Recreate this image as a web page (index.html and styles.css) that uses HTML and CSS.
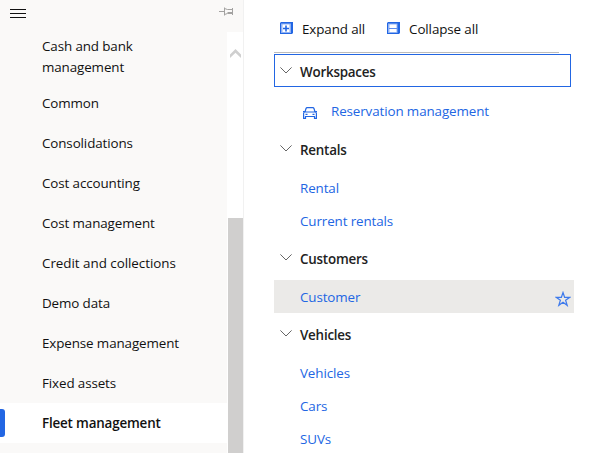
FILE: index.html
```html
<!DOCTYPE html>
<html lang="en">
<head>
<meta charset="utf-8">
<title>Fleet management</title>
<link rel="stylesheet" href="styles.css">
</head>
<body>
<div class="app">
  <aside class="sidebar">
    <header class="sidebar-head">
      <svg class="menu-icon" width="16" height="9" viewBox="0 0 16 9"><path d="M0 .5h16M0 4.5h16M0 8.5h16"/></svg>
      <svg class="pin-icon" width="15" height="9" viewBox="0 0 15 9"><path d="M0 4.5h5M5.500 .5v8M5.500 1.500l3 1h5M5.500 7.500l3-1h5M13.500 1v7M8.500 5.500h5"/></svg>
    </header>
    <div class="sidebar-body">
      <nav class="modules">
        <a class="module two-line">Cash and bank<br>management</a>
        <a class="module">Common</a>
        <a class="module">Consolidations</a>
        <a class="module">Cost accounting</a>
        <a class="module">Cost management</a>
        <a class="module loose">Credit and collections</a>
        <a class="module">Demo data</a>
        <a class="module">Expense management</a>
        <a class="module">Fixed assets</a>
        <a class="module selected">Fleet management</a>
      </nav>
      <div class="scrollbar">
        <svg class="scroll-up" width="11" height="9" viewBox="0 0 11 9"><path d="M0 5.600L5.500 0 11 5.600V9L5.500 3.800 0 9z"/></svg>
        <div class="thumb"></div>
      </div>
    </div>
  </aside>
  <main class="content">
    <div class="toolbar">
      <button class="tool">
        <svg class="box-icon" width="13" height="12" viewBox="0 0 13 12"><path class="box-frame" d="M0 1L1 0h12v11l-1 1H0z"/><path class="box-light" d="M1 1.500h10v9.500H1z"/><path class="box-hole" d="M2.500 2.500h7v7.500h-7z"/><path class="box-sign" d="M3 6.500h6M6 3.500v6"/></svg>
        <span>Expand all</span>
      </button>
      <button class="tool">
        <svg class="box-icon" width="13" height="12" viewBox="0 0 13 12"><path class="box-frame" d="M0 1L1 0h12v11l-1 1H0z"/><path class="box-light" d="M1 1.500h9.500v9.500H1z"/><path class="box-hole" d="M2.500 2.500h7v7.500h-7z"/><path class="box-sign thin" d="M2 6.500h8"/></svg>
        <span>Collapse all</span>
      </button>
    </div>
    <section class="group">
      <h2 class="group-head focused"><svg class="chevron" width="12" height="7" viewBox="0 0 12 7"><path d="M.4 .4L6 6 11.600 .4"/></svg>Workspaces</h2>
      <a class="link workspace">
        <svg class="car-icon" width="14" height="12" viewBox="0 0 14 12"><path d="M2 5L3 1.500Q3.300.6 4.200.6h5.600q.9 0 1.200.9L12 5M0 4.500h1.500M12.500 4.500H14M2 5h10q1.400 0 1.400 1.400V11.400H11.500V9.500h-9v1.900H.6V6.400Q.6 5 2 5M2.500 7.300h2M9.500 7.300h2"/></svg>
        <span>Reservation management</span>
      </a>
    </section>
    <section class="group">
      <h2 class="group-head"><svg class="chevron" width="12" height="7" viewBox="0 0 12 7"><path d="M.4 .4L6 6 11.600 .4"/></svg>Rentals</h2>
      <a class="link">Rental</a>
      <a class="link">Current rentals</a>
    </section>
    <section class="group">
      <h2 class="group-head"><svg class="chevron" width="12" height="7" viewBox="0 0 12 7"><path d="M.4 .4L6 6 11.600 .4"/></svg>Customers</h2>
      <a class="link hovered">Customer
        <svg class="star-icon" width="16" height="16" viewBox="0 0 16 16"><path d="M8 1.500L9.600 6.300H14.800L10.600 9.300 12.200 14.300 8 11.200 3.800 14.300 5.400 9.300 1.200 6.300H6.400z"/></svg>
      </a>
    </section>
    <section class="group">
      <h2 class="group-head"><svg class="chevron" width="12" height="7" viewBox="0 0 12 7"><path d="M.4 .4L6 6 11.600 .4"/></svg>Vehicles</h2>
      <a class="link">Vehicles</a>
      <a class="link">Cars</a>
      <a class="link">SUVs</a>
    </section>
  </main>
</div>
</body>
</html>
```
FILE: styles.css
```css
* { box-sizing: border-box; }
body {
  margin: 0;
  overflow: hidden;
  background: #fff;
  color: #111;
  font-family: "Segoe UI", "Open Sans", "Noto Sans", sans-serif;
  font-size: 13.4px;
  letter-spacing: -0.11px;
}
svg { flex: none; fill: none; }
.app { display: flex; height: 453px; }

.sidebar {
  display: flex;
  flex-direction: column;
  width: 244px;
  background: #faf9f8;
  border-right: 1px solid #f1f1f1;
}
.sidebar-head {
  display: flex;
  flex: none;
  justify-content: space-between;
  height: 32px;
  padding: 9px 9px 0 10px;
}
.menu-icon { stroke: #111; }
.pin-icon { margin-top: -2px; stroke: #a3a2a1; }
.sidebar-body { display: flex; flex: 1; min-height: 0; }
.modules { width: 227px; overflow: hidden; }
.module {
  display: block;
  height: 40px;
  padding-left: 42px;
  line-height: 40px;
  white-space: nowrap;
}
.module.two-line { height: 51px; padding-top: 4px; line-height: 21px; }
.module.loose { letter-spacing: -0.03px; }
.module.selected {
  position: relative;
  background: #fff;
  font-weight: 600;
  letter-spacing: -0.17px;
}
.module.selected::before {
  content: "";
  position: absolute;
  left: -3px;
  top: 6px;
  width: 8px;
  height: 28px;
  border-radius: 3px;
  background: #2266e3;
}
.scrollbar {
  display: flex;
  flex-direction: column;
  width: 16px;
  padding-top: 17px;
  background: #fff;
}
.scroll-up { margin-left: 3px; fill: #cfcfcf; }
.thumb { flex: 1; width: 15px; margin: 160px 0 0 1px; background: #d0cfce; }

.content { width: 300px; margin-left: 30px; }
.toolbar {
  display: flex;
  gap: 22px;
  width: 285px;
  height: 53px;
  padding: 19px 0 0 6px;
  border-bottom: 1px solid #bcbcbc;
}
.tool {
  display: flex;
  gap: 9px;
  height: 20px;
  padding: 0;
  border: 0;
  background: none;
  color: inherit;
  font: inherit;
  letter-spacing: inherit;
  line-height: 20px;
  white-space: nowrap;
}
.box-icon { margin-top: 3px; }
.box-frame { fill: #2266e3; }
.box-light { fill: #8fb2f5; }
.box-hole { fill: #fff; }
.box-sign { stroke: #2266e3; stroke-width: 1.6; }
.box-sign.thin { stroke: #5c8ded; stroke-width: 1; }

.group-head {
  display: flex;
  align-items: center;
  gap: 8px;
  height: 33px;
  margin: 4px 0 6px;
  padding: 2px 0 0 6px;
  color: #222;
  font-size: inherit;
  font-weight: 600;
  letter-spacing: -0.22px;
}
.group-head.focused {
  width: 297px;
  margin: 1px 0 7px;
  padding: 3px 0 0 5px;
  border: 1px solid #2266e3;
}
.chevron { margin-top: -3px; stroke: #666; }
.link {
  display: flex;
  align-items: center;
  height: 33px;
  padding-left: 26px;
  color: #2266e3;
  white-space: nowrap;
}
.link.workspace { gap: 14px; height: 34px; padding: 0 0 1px 29px; }
.car-icon { margin-top: 4px; stroke: #2266e3; stroke-width: 1.2; }
.link.hovered { justify-content: space-between; padding-right: 3px; background: #ebeae8; }
.star-icon { margin-top: 5px; stroke: #3f7bec; stroke-width: 1.2; }
```
